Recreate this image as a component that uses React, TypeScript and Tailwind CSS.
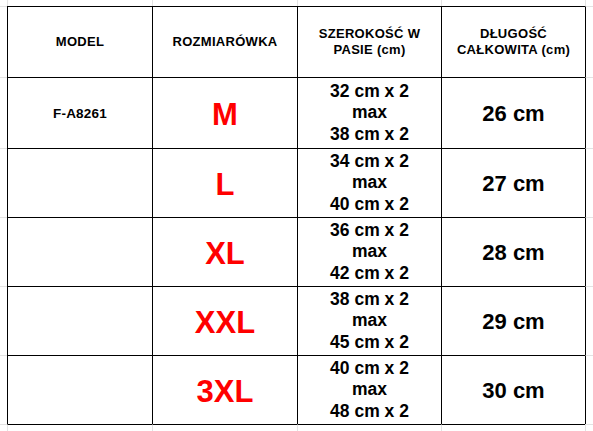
const COLS = 6;
const ROWS = 8;

type Row = { model: string; size: string; waist: string[]; length: string };

const rows: Row[] = [
  { model: "F-A8261", size: "M", waist: ["32 cm x 2", "max", "38 cm x 2"], length: "26 cm" },
  { model: "", size: "L", waist: ["34 cm x 2", "max", "40 cm x 2"], length: "27 cm" },
  { model: "", size: "XL", waist: ["36 cm x 2", "max", "42 cm x 2"], length: "28 cm" },
  { model: "", size: "XXL", waist: ["38 cm x 2", "max", "45 cm x 2"], length: "29 cm" },
  { model: "", size: "3XL", waist: ["40 cm x 2", "max", "48 cm x 2"], length: "30 cm" },
];

function Header({ lines }: { lines: string[] }) {
  return (
    <div className="text-[13px] leading-[16.5px] font-bold tracking-[0.3px] text-black text-center">
      {lines.map((l, i) => (
        <div key={i}>{l}</div>
      ))}
    </div>
  );
}

function cellContent(r: number, c: number) {
  if (r === 1) {
    if (c === 1) return <Header lines={["MODEL"]} />;
    if (c === 2) return <Header lines={["ROZMIARÓWKA"]} />;
    if (c === 3) return <Header lines={["SZEROKOŚĆ W", "PASIE (cm)"]} />;
    if (c === 4) return <Header lines={["DŁUGOŚĆ", "CAŁKOWITA (cm)"]} />;
    return null;
  }
  if (r >= 2 && r <= 6) {
    const row = rows[r - 2];
    if (c === 1)
      return <span className="text-[13.5px] font-bold tracking-[0.2px] text-black mt-[2px]">{row.model}</span>;
    if (c === 2)
      return <span className="text-[31px] font-bold text-[#ff0000] leading-none mt-[3px]">{row.size}</span>;
    if (c === 3)
      return (
        <div className="text-[17.5px] leading-[21.5px] font-bold text-black text-center">
          {row.waist.map((w, i) => (
            <div key={i}>{w}</div>
          ))}
        </div>
      );
    if (c === 4)
      return <span className="text-[22px] font-bold text-black leading-none mt-[2px]">{row.length}</span>;
  }
  return null;
}

export default function App() {
  const cells = [];
  for (let r = 0; r < ROWS; r++) {
    for (let c = 0; c < COLS; c++) {
      const inTable = r >= 1 && r <= 6;
      const inCols = c >= 1 && c <= 4;
      const left =
        c === 0 ? "" : inTable ? "border-l border-l-black" : "border-l border-l-[#e2e2e2]";
      const top =
        r === 0 ? "" : inCols ? "border-t border-t-black" : "border-t border-t-[#e2e2e2]";
      cells.push(
        <div key={`${r}-${c}`} className={`flex items-center justify-center ${left} ${top}`}>
          {cellContent(r, c)}
        </div>
      );
    }
  }

  return (
    <div
      className="w-[593px] h-[431px] bg-white overflow-hidden grid grid-cols-[7px_145px_145px_144px_144px_1fr] grid-rows-[6px_71px_71px_69px_69px_69px_69px_1fr]"
      style={{ fontFamily: '"Liberation Sans", Arial, sans-serif' }}
    >
      {cells}
    </div>
  );
}
